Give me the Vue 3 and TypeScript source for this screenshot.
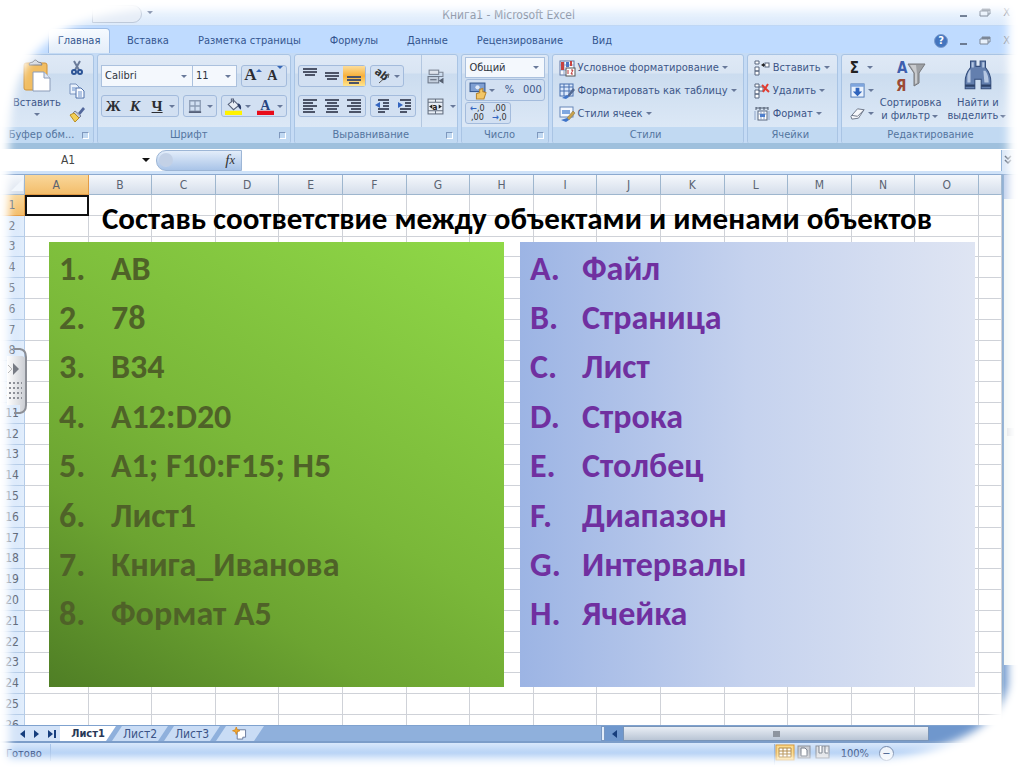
<script setup lang="ts">
interface Item { mark: string; text: string }

const tabs: string[] = ['Вставка', 'Разметка страницы', 'Формулы', 'Данные', 'Рецензирование', 'Вид']
const columns: string[] = 'ABCDEFGHIJKLMNO'.split('')
const rows: number[] = Array.from({ length: 26 }, (_, i) => i + 1)

const objects: Item[] = ['AB', '78', 'B34', 'A12:D20', 'A1; F10:F15; H5', 'Лист1', 'Книга_Иванова', 'Формат А5']
  .map((text, i) => ({ mark: `${i + 1}.`, text }))
const names: Item[] = ['Файл', 'Страница', 'Лист', 'Строка', 'Столбец', 'Диапазон', 'Интервалы', 'Ячейка']
  .map((text, i) => ({ mark: `${'ABCDEFGH'[i]}.`, text }))

const bars = (list: number[][]): string =>
  list.map(([x, y, w]) => `<rect x="${x}" y="${y}" width="${w}" height="2" fill="#4c5468"/>`).join('')

const icons: Record<string, string> = {
  top: bars([[1, 0, 14], [1, 3, 14], [3, 6, 10]]),
  middle: bars([[1, 4, 14], [1, 7, 14], [3, 10, 10]]),
  bottom: bars([[1, 8, 14], [1, 11, 14], [3, 14, 10]]),
  left: bars([[1, 1, 14], [1, 4, 10], [1, 7, 14], [1, 10, 10], [1, 13, 12]]),
  center: bars([[1, 1, 14], [3, 4, 10], [1, 7, 14], [3, 10, 10], [2, 13, 12]]),
  right: bars([[1, 1, 14], [5, 4, 10], [1, 7, 14], [5, 10, 10], [3, 13, 12]]),
  outdent: bars([[4, 1, 11], [9, 4, 6], [9, 7, 6], [4, 10, 11], [4, 13, 7]]) + '<path d="M6 4v6L1 7z" fill="#3465c0"/>',
  indent: bars([[4, 1, 11], [9, 4, 6], [9, 7, 6], [4, 10, 11], [4, 13, 7]]) + '<path d="M2 4v6l5-3z" fill="#3465c0"/>',
  angle: '<path d="M5 15L14 7M15 6l-4 1M15 6l-1 4" stroke="#555" fill="none"/><text x="0" y="9" font-size="11" font-weight="700" fill="#333" transform="rotate(38 6 7)">ab</text>',
  wrap: '<rect x="2" y="2" width="9" height="4" fill="#dfe4ec" stroke="#7a8494"/><path d="M11 4h4v4h-5" fill="none" stroke="#7a8494"/><rect x="1" y="8" width="10" height="6" fill="#c3cedd" stroke="#6d7889"/><path d="M3 11h6M12 12l3-2v4z" stroke="#555f70" fill="#555f70"/>',
  merge: '<rect x="1" y="1" width="14" height="14" fill="#e8eef6" stroke="#646f80"/><path d="M1 4h14M1 12h14M8 1v3M8 12v3" stroke="#646f80"/><path d="M2 8l3-2v4zM14 8l-3-2v4z" fill="#222"/><text x="5" y="11" font-size="8" font-weight="700" fill="#222">a</text>',
  border: '<path d="M2 2h12v12H2zM8 2v12M2 8h12" fill="none" stroke="#8c9cb4" stroke-width="1.500"/><path d="M1 15h14" stroke="#56617a" stroke-width="2"/>',
  fill: '<path d="M3 6l5-4 5 5-5 4z" fill="#e8edf5" stroke="#56617a"/><path d="M6 4V1h2v4" fill="none" stroke="#56617a"/><path d="M12 5q4 1 3 6-2-1-3-4z" fill="#2a3c68"/><rect x="0" y="12" width="16" height="4" fill="#fff200"/>',
  color: '<text x="3" y="11" font-size="13" font-weight="700" font-family="Liberation Serif" fill="#27457f">A</text><rect x="0" y="12" width="16" height="4" fill="#e80c1a"/>',
  cut: '<path d="M5 1l5 9M11 1L6 10" stroke="#6b7c9a" stroke-width="2"/><circle cx="5" cy="12" r="2" fill="none" stroke="#2c5496" stroke-width="2"/><circle cx="11" cy="12" r="2" fill="none" stroke="#2c5496" stroke-width="2"/>',
  copy: '<path d="M1 1h6l3 3v7H1z" fill="#eaf2fc" stroke="#7892bd"/><path d="M7 5h5l3 3v7H7z" fill="#f8fbff" stroke="#4e70aa"/><path d="M9 9h4M9 11h4M9 13h4M3 5h4M3 7h3" stroke="#6a8fc9"/>',
  brush: '<path d="M9 7l5-6 2 2-5 6z" fill="#53689c"/><path d="M6 5l6 5-2 2-6-5z" fill="#c5cbd8" stroke="#77809a"/><path d="M1 9l4-2 5 5-4 4z" fill="#f2cf57" stroke="#b98d22"/>',
  money: '<rect x="1" y="1" width="14" height="8" fill="#7f9fd2" stroke="#35578f"/><circle cx="8" cy="5" r="2" fill="#dfe9f8"/><path d="M7 16v-5l3-1V7l3-1v3l3 1-2 6z" fill="#f2c667" stroke="#b98730"/>',
  cond: '<rect x="1" y="1" width="14" height="14" fill="#f7f9fd" stroke="#6379a5"/><path d="M5 1v14M1 5h14M1 10h14" stroke="#8aa0c8"/><rect x="2" y="2" width="3" height="8" fill="#c7423f"/><rect x="7" y="2" width="3" height="5" fill="#4b76c4"/><rect x="11" y="1" width="2" height="5" fill="#c7423f"/><rect x="7" y="8" width="9" height="8" fill="#fff" stroke="#555"/><path d="M9 10v4M12 10h2l-2 4h2" stroke="#b33" fill="none"/>',
  table: '<rect x="1" y="1" width="13" height="12" fill="#dbe8fb" stroke="#466eae"/><path d="M1 4h13M1 8h13M5 1v12M10 1v12" stroke="#466eae"/><path d="M8 13l6-8 2 2-6 7z" fill="#536992"/><path d="M3 15l5-3 2 2-3 2z" fill="#3f74c8"/>',
  cellstyle: '<rect x="1" y="1" width="13" height="10" fill="#f4f8ff" stroke="#6686b8"/><rect x="3" y="4" width="8" height="4" fill="#7fa7e0"/><path d="M8 12l6-7 2 2-6 7z" fill="#c8a24d" stroke="#7c6a3c" stroke-width=".5"/><path d="M2 14l6-2 2 2-3 2z" fill="#3f74c8"/>',
  insert: '<path d="M1 1h4v3H1zM1 7h4v4H1zM1 11h4v4H1z" fill="#fff" stroke="#59677f"/><path d="M7 5l3-2v1h1v2h-1v1z" fill="#222"/><rect x="11" y="3" width="4" height="4" fill="#fff" stroke="#59677f"/>',
  remove: '<path d="M1 1h4v3H1zM1 7h4v4H1zM1 11h4v4H1zM5 4h4v4H5z" fill="#fff" stroke="#59677f"/><path d="M8 2l7 7M14 1L9 9" stroke="#e23c32" stroke-width="2"/>',
  format: '<path d="M2 2h12M2 1v3M6 1v3M10 1v3M14 1v3" stroke="#4d586c"/><rect x="4" y="5" width="9" height="9" fill="#fff" stroke="#59677f"/><path d="M1 5v9M15 5v9M4 8h9M7 5v9M10 5v9" stroke="#8da3c8"/><rect x="6" y="8" width="5" height="3" fill="#4f7fcc"/>',
  down: '<rect x="1" y="1" width="14" height="14" fill="#e8f1fd" stroke="#4a74b5"/><rect x="1" y="1" width="14" height="3" fill="#7ea5dd"/><path d="M6 5h4v4h3l-5 5-5-5h3z" fill="#2f64bd"/>',
  eraser: '<path d="M1 11l7-8 7 1-6 9-7 1z" fill="#f7f8fb" stroke="#6b7486"/><path d="M2 10l6 1 7-7" fill="none" stroke="#6b7486"/>',
  paste: '<rect x="1" y="4" width="23" height="27" rx="2" fill="#f1bd62" stroke="#cf9136"/><path d="M6 6q0-3 4-3 2-4 5 0 4 0 4 3z" fill="#d6dae1" stroke="#7e838e"/><path d="M10 13h11l6 6v13H10z" fill="#fff" stroke="#8b9bb8"/><path d="M21 13v6h6" fill="#dfe7f3" stroke="#8b9bb8"/>',
  sort: '<path d="M13 4h17l-6 9v10l-5 3V13z" fill="#9ea1a5" stroke="#77797d"/><path d="M15 5h6l1 9v9l-2 1V13z" fill="#c9cbce"/><text x="2" y="13" font-size="15" font-weight="700" fill="#3e5fae">А</text><text x="1" y="31" font-size="15" font-weight="700" fill="#9c4a35">Я</text>',
  find: '<path d="M6 1h5v5h4V1h5v6q5 6 5 13v7h-9v-9h-6v9H1v-7q0-7 5-13z" fill="#637fae" stroke="#344e7c"/><path d="M7 2h2v5H7zM17 2h2v5h-2zM3 15q1-5 3-6v12H3zM18 10h2q3 4 3 11h-4z" fill="#b5c7e2"/><path d="M1 24h9M16 24h9" stroke="#2d4268" stroke-width="2"/>',
  restore: '<path d="M3 1h8v5H3z" fill="#e8f1fc" stroke="#7c8797"/><path d="M3 2h8" stroke="#7c8797" stroke-width="2"/><path d="M1 3h8v5H1z" fill="#e8f1fc" stroke="#7c8797"/>',
}
const alignTop = ['top', 'middle', 'bottom']
const alignRow = ['left', 'center', 'right']
const styleRows = [['cond', 'Условное форматирование'], ['table', 'Форматировать как таблицу'], ['cellstyle', 'Стили ячеек']]
const cellRows = [['insert', 'Вставить'], ['remove', 'Удалить'], ['format', 'Формат']]
</script>

<template>
  <div class="app">
    <header class="titlebar">
      <span class="office-tail"></span>
      <button class="qat" aria-label="Панель быстрого доступа"><i class="arr"></i></button>
      <span class="doc-title">Книга1 - Microsoft Excel</span>
      <div class="winbtns">
        <button aria-label="Свернуть"><i class="min"></i></button>
        <button aria-label="Развернуть"><svg viewBox="0 0 12 9" width="12" height="9" v-html="icons.restore" /></button>
        <button aria-label="Закрыть">X</button>
      </div>
    </header>

    <nav class="tabs">
      <button class="tab active">Главная</button>
      <button v-for="t in tabs" :key="t" class="tab">{{ t }}</button>
      <div class="winbtns">
        <button class="help" aria-label="Справка">?</button>
        <button aria-label="Свернуть окно"><i class="min"></i></button>
        <button aria-label="Развернуть окно"><svg viewBox="0 0 12 9" width="12" height="9" v-html="icons.restore" /></button>
        <button aria-label="Закрыть окно">X</button>
      </div>
    </nav>

    <section class="ribbon">
      <div class="group">
        <div class="body clipboard">
          <button class="big">
            <svg viewBox="0 0 28 33" width="28" height="33" v-html="icons.paste" />
            <span>Вставить</span><i class="arr"></i>
          </button>
          <div class="stack">
            <button v-for="n in ['cut', 'copy', 'brush']" :key="n" :aria-label="n"><svg viewBox="0 0 16 16" width="16" height="16" v-html="icons[n]" /></button>
          </div>
        </div>
        <div class="foot"><span>Буфер обм...</span><i class="launch"></i></div>
      </div>

      <div class="group">
        <div class="body two">
          <div class="line">
            <div class="fields">
              <label class="field wide"><select aria-label="Шрифт"><option>Calibri</option></select><i class="arr"></i></label>
              <label class="field narrow"><select aria-label="Размер"><option>11</option></select><i class="arr"></i></label>
            </div>
            <div class="set"><button class="serif grow">A<i class="up"></i></button><button class="serif shrink">A<i class="arr blue"></i></button></div>
          </div>
          <div class="line">
            <div class="set"><button class="serif">Ж</button><button class="serif ital">К</button><button class="serif under">Ч</button><i class="arr"></i></div>
            <div class="set"><button aria-label="Границы"><svg viewBox="0 0 16 16" width="14" height="14" v-html="icons.border" /></button><i class="arr"></i></div>
            <div class="set">
              <button aria-label="Заливка"><svg viewBox="0 0 16 16" width="17" height="17" v-html="icons.fill" /></button><i class="arr"></i>
              <button aria-label="Цвет текста"><svg viewBox="0 0 16 16" width="17" height="17" v-html="icons.color" /></button><i class="arr"></i>
            </div>
          </div>
        </div>
        <div class="foot"><span>Шрифт</span><i class="launch"></i></div>
      </div>

      <div class="group">
        <div class="body align">
          <div class="two">
            <div class="line">
              <div class="set"><button v-for="n in alignTop" :key="n" :aria-label="n" :class="{ on: n === 'bottom' }"><svg viewBox="0 0 16 16" width="16" height="16" v-html="icons[n]" /></button></div>
              <div class="set"><button aria-label="Ориентация"><svg viewBox="0 0 16 16" width="16" height="16" v-html="icons.angle" /></button><i class="arr"></i></div>
            </div>
            <div class="line">
              <div class="set"><button v-for="n in alignRow" :key="n" :aria-label="n"><svg viewBox="0 0 16 16" width="16" height="16" v-html="icons[n]" /></button></div>
              <div class="set"><button v-for="n in ['outdent', 'indent']" :key="n" :aria-label="n"><svg viewBox="0 0 16 16" width="16" height="16" v-html="icons[n]" /></button></div>
            </div>
          </div>
          <div class="two merge">
            <div class="line"><button aria-label="Перенос текста"><svg viewBox="0 0 16 16" width="17" height="17" v-html="icons.wrap" /></button></div>
            <div class="line"><button aria-label="Объединить"><svg viewBox="0 0 16 16" width="17" height="17" v-html="icons.merge" /></button><i class="arr"></i></div>
          </div>
        </div>
        <div class="foot"><span>Выравнивание</span><i class="launch"></i></div>
      </div>

      <div class="group">
        <div class="body three">
          <label class="field"><select aria-label="Числовой формат"><option>Общий</option></select><i class="arr"></i></label>
          <div class="set number"><button aria-label="Денежный"><svg viewBox="0 0 16 16" width="17" height="17" v-html="icons.money" /></button><i class="arr"></i><button>%</button><button>000</button></div>
          <div class="set digits"><button><b>←</b>,0<br>,00</button><button>,00<br><b>→</b>,0</button></div>
        </div>
        <div class="foot"><span>Число</span><i class="launch"></i></div>
      </div>

      <div class="group">
        <div class="body three">
          <button v-for="[n, t] in styleRows" :key="n" class="cmd"><svg viewBox="0 0 16 16" width="16" height="16" v-html="icons[n]" />{{ t }}<i class="arr"></i></button>
        </div>
        <div class="foot"><span>Стили</span></div>
      </div>

      <div class="group">
        <div class="body three">
          <button v-for="[n, t] in cellRows" :key="n" class="cmd"><svg viewBox="0 0 16 16" width="16" height="16" v-html="icons[n]" />{{ t }}<i class="arr"></i></button>
        </div>
        <div class="foot"><span>Ячейки</span></div>
      </div>

      <div class="group">
        <div class="body edit">
          <div class="three">
            <button class="cmd sigma">Σ<i class="arr"></i></button>
            <button class="cmd" aria-label="Заполнить"><svg viewBox="0 0 16 16" width="15" height="15" v-html="icons.down" /><i class="arr"></i></button>
            <button class="cmd" aria-label="Очистить"><svg viewBox="0 0 16 16" width="15" height="15" v-html="icons.eraser" /><i class="arr"></i></button>
          </div>
          <button class="big"><svg viewBox="0 0 32 32" width="32" height="32" v-html="icons.sort" /><span>Сортировка<br>и фильтр<i class="arr"></i></span></button>
          <button class="big"><svg viewBox="0 0 26 30" width="28" height="32" v-html="icons.find" /><span>Найти и<br>выделить<i class="arr"></i></span></button>
        </div>
        <div class="foot"><span>Редактирование</span></div>
      </div>
    </section>

    <section class="formula">
      <input class="namebox" aria-label="Имя ячейки" value="A1">
      <i class="arr black"></i>
      <div class="fx"><span class="knob"></span><button>f<small>x</small></button></div>
      <input class="entry" aria-label="Строка формул">
      <button class="expand" aria-label="Развернуть строку формул"><svg viewBox="0 0 8 10" width="8" height="10"><path d="M1 1l3 3 3-3M1 5l3 3 3-3" fill="none" stroke="#3c4a60" stroke-width="1.500" /></svg></button>
    </section>

    <main class="sheet">
      <table>
        <thead>
          <tr><th class="corner"><i></i></th><th v-for="c in columns" :key="c" :class="{ sel: c === 'A' }">{{ c }}</th><th class="last"></th></tr>
        </thead>
        <tbody>
          <tr v-for="r in rows" :key="r">
            <th :class="{ sel: r === 1 }">{{ r }}</th>
            <td v-for="c in columns" :key="c" :class="{ cursor: r === 1 && c === 'A' }"></td><td></td>
          </tr>
        </tbody>
      </table>
      <div class="vscroll"><i class="thumb"></i><i class="grip"></i><i class="low"></i></div>
    </main>

    <footer class="sheetbar">
      <div class="nav">
        <button aria-label="Назад"><svg viewBox="0 0 5 8" width="5" height="8"><path d="M5 0v8L0 4z" /></svg></button>
        <button aria-label="Вперёд"><svg viewBox="0 0 5 8" width="5" height="8"><path d="M0 0v8l5-4z" /></svg></button>
        <button aria-label="Последний"><svg viewBox="0 0 8 8" width="8" height="8"><path d="M0 0v8l5-4zM6 0h2v8H6z" /></svg></button>
      </div>
      <button class="stab current">Лист1</button>
      <button class="stab">Лист2</button>
      <button class="stab">Лист3</button>
      <button class="stab new" aria-label="Вставить лист"><svg viewBox="0 0 16 14" width="16" height="13"><path d="M5 3h9v8h-3v2H5z" fill="#fff" stroke="#66779a" /><path d="M4 0l1 3 3 1-3 1-1 3-1-3-3-1 3-1z" fill="#f2a92f" stroke="#d98a20" /></svg></button>
      <div class="hscroll"><i class="split"></i><button aria-label="Влево"><svg viewBox="0 0 5 8" width="5" height="8"><path d="M5 0v8L0 4z" /></svg></button><div class="track"><i></i></div></div>
    </footer>
    <div class="status">
      <span class="ready">Готово</span>
      <div class="views">
        <svg viewBox="0 0 58 17" width="58" height="17">
          <rect x="1" y="1" width="18" height="15" fill="#fbd98a" stroke="#d79a3a" />
          <path d="M4 4h12v9H4zM8 4v9M12 4v9M4 7h12M4 10h12" fill="#fff" stroke="#b08a4a" />
          <rect x="23" y="2" width="12" height="12" fill="#c9ccd2" stroke="#8b919c" /><path d="M26 4h4l2 2v6h-6z" fill="#fff" stroke="#777e8b" />
          <rect x="41" y="2" width="13" height="12" fill="#e0e2e6" stroke="#8b919c" /><path d="M44 2v7h3V2M50 2v7h3" fill="#fff" stroke="#777e8b" />
        </svg>
      </div>
      <span class="pct">100%</span>
      <button class="zoomout" aria-label="Уменьшить">−</button>
    </div>

    <svg class="vignette" viewBox="0 0 1024 767" preserveAspectRatio="none" aria-hidden="true">
      <defs><filter id="soft" x="-5%" y="-5%" width="110%" height="110%"><feGaussianBlur stdDeviation="4" /></filter></defs>
      <path filter="url(#soft)" fill="#fff" fill-rule="evenodd" d="M-40-40H1064V807H-40ZM150 9H1008V685Q1002 712 974 731Q930 756 880 759H9V140Q10 100 22 74Q34 48 60 34Q84 14 150 9Z" />
    </svg>

    <aside class="handle"><svg viewBox="0 0 26 66" width="26" height="66">
      <defs><linearGradient id="hg"><stop offset="0" stop-color="#fff" /><stop offset="1" stop-color="#c9ccd2" /></linearGradient></defs>
      <path d="M6 8h15q4 1 4 4v45q0 7-6 8v-8H6z" fill="url(#hg)" /><path d="M13 1h6q6 1 6 8v48q0 7-6 8h-6" fill="none" stroke="#8c8f96" stroke-width="2" />
      <path d="M12 15v12l6-6z" fill="#777b84" /><path d="M7 17l4 4-4 4" fill="none" stroke="#bbb" />
      <path d="M8 35h13M8 40h13M8 45h13M8 50h13" stroke="#8d9098" stroke-width="2" stroke-dasharray="2 2" />
    </svg></aside>

    <article class="slide">
      <h1>Составь соответствие между объектами и именами объектов</h1>
      <div class="panels">
        <ul class="panel green"><li v-for="o in objects" :key="o.mark"><span>{{ o.mark }}</span>{{ o.text }}</li></ul>
        <ul class="panel blue"><li v-for="o in names" :key="o.mark"><span>{{ o.mark }}</span>{{ o.text }}</li></ul>
      </div>
    </article>
  </div>
</template>

<style>
body { margin: 0; background: #fff; }
</style>

<style scoped>
* { box-sizing: border-box; }
.app { position: relative; height: 100vh; min-height: 767px; overflow: hidden; display: flex; flex-direction: column; background: #d5e5f8; font: 11px/14px "DejaVu Sans Condensed", "Noto Sans", sans-serif; color: #3d5688; }
button { border: 0; padding: 0; background: none; font: inherit; color: inherit; display: flex; align-items: center; justify-content: center; }
svg { overflow: visible; }
.arr { flex: none; display: inline-block; border: 3px solid transparent; border-top-color: #68799a; border-bottom: 0; margin: 0 2px; }
.arr.black { border-width: 4px 4px 0; border-top-color: #111; }
.titlebar { height: 26px; flex: none; display: flex; align-items: center; background: linear-gradient(#f4f9ff, #dceafb); border-bottom: 1px solid #bfd7f5; padding-right: 14px; color: #8d97a8; }
.office-tail { width: 50px; height: 18px; margin-left: 92px; border: 1px solid #bdc9da; border-radius: 0 9px 9px 0; background: #e6edf7; align-self: flex-start; margin-top: 5px; }
.qat { margin-left: 3px; }
.doc-title { flex: 1; text-align: center; padding-top: 4px; padding-right: 98px; font-size: 12px; }
.winbtns { display: flex; gap: 12px; align-items: center; color: #7c8797; }
.min { width: 7px; height: 2px; background: #6c7b92; margin-top: 6px; }
.tabs { height: 27px; flex: none; display: flex; align-items: stretch; gap: 29px; padding: 2px 14px 0 48px; background: #bfdbff; color: #34568f; }
.tab.active { width: 62px; background: linear-gradient(#f6faff, #e3edf9); border: 1px solid #9dbce6; border-bottom: 0; border-radius: 4px 4px 0 0; margin-right: -12px; }
.tabs .winbtns { margin-left: auto; }
.help { width: 14px; height: 14px; border-radius: 50%; background: #4475be; color: #fff; font-weight: 700; border: 1px solid #7c9dce; }
.ribbon { flex: none; height: 91px; display: grid; grid-template-columns: 94fr 194fr 164fr 87fr 192fr 91fr 183fr; gap: 3px; padding-top: 1px; background: #c5dbf5; }
.group { min-width: 0; display: flex; flex-direction: column; border: 1px solid #a9c4e4; border-radius: 3px; background: linear-gradient(#dfe9f6 0, #d9e5f3 18px, #cbdcef 19px, #dce8f6 72px); overflow: hidden; }
.body { height: 72px; padding: 0 3px; }
.foot { flex: 1; display: flex; align-items: center; background: #c1d9f2; color: #54759f; padding-right: 4px; }
.foot span { flex: 1; text-align: center; white-space: nowrap; }
.launch { width: 7px; height: 7px; border: 1px solid #7f98bd; border-right-color: #fff; border-bottom-color: #fff; }
.two { display: flex; flex-direction: column; gap: 8px; padding-top: 10px; }
.line { display: flex; gap: 4px; height: 22px; align-items: center; }
.set { display: flex; height: 22px; align-items: center; border: 1px solid #a3bbdc; border-radius: 3px; background: #d2e0f2; }
.set button { width: 22px; height: 20px; }
.set .arr { margin: 0 3px 0 1px; }
.set button .arr { margin: 0; }
.set button.on { background: linear-gradient(#fcdd9a, #f8b13a 50%, #ffe58e); }
.fields { display: flex; flex: 1; }
.field { display: flex; height: 22px; align-items: center; background: #f4f8fd; border: 1px solid #abc1de; padding: 0 3px; color: #2e3440; }
.field select { flex: 1; min-width: 0; width: 0; appearance: none; border: 0; background: none; font: inherit; color: inherit; padding: 0; }
.wide { flex: 9; }
.narrow { flex: 4; border-left: 0; }
.set .serif { font: bold 15px/18px "Liberation Serif", serif; color: #2b2d33; }
.set .grow { font-size: 17px; }
.set .shrink { font-size: 14px; line-height: 20px; }
.set .blue { border-top-color: #3767b5; margin-top: 3px; }
.grow, .shrink { align-items: flex-start; }
.up { border: 3px solid transparent; border-top: 0; border-bottom-color: #3767b5; margin-top: 3px; }
.set .ital { font-style: italic; }
.set .under { text-decoration: underline; }
.clipboard { display: flex; padding-left: 10px; gap: 6px; }
.big { flex-direction: column; justify-content: flex-start; padding-top: 5px; line-height: 13px; }
.clipboard .big { padding-top: 4px; width: 52px; }
.clipboard .big span { margin: 4px 0; }
.stack { display: flex; flex-direction: column; gap: 7px; padding-top: 5px; }
.align { display: flex; gap: 5px; }
.merge { border-left: 1px solid #b3c7e0; padding-left: 5px; }
.three { display: flex; flex-direction: column; justify-content: space-between; padding-top: 2px; padding-bottom: 3px; align-items: flex-start; }
.three .field { width: 80px; height: 21px; }
.number button:last-child { width: 24px; }
.digits button { font-size: 9px; line-height: 9px; display: block; color: #333; }
.digits b { color: #3465c0; }
.cmd { height: 21px; gap: 3px; white-space: nowrap; padding-left: 3px; }
.cmd .arr { margin: 0; }
.edit { display: flex; gap: 6px; padding-left: 5px; }
.edit .three { padding-left: 0; }
.edit .big { gap: 4px; }
.edit .big .arr { vertical-align: middle; }
.sigma { font-weight: 700; font-size: 15px; color: #222; gap: 8px; }
.formula { flex: none; height: 31px; margin-top: -1px; display: flex; align-items: center; border-top: 6px solid #9fc0dd; border-bottom: 3px solid #cfe2f8; background: #fff; }
.formula input { border: 0; padding: 0; background: none; outline: 0; font: inherit; font-size: 12px; color: #444; }
.namebox { width: 136px; text-align: center; }
.formula .black { margin: 0 6px; }
.fx { width: 86px; height: 21px; border-radius: 10px 0 0 10px; background: linear-gradient(#e3edfa, #a9c4e8); border: 1px solid #9db6d6; display: flex; align-items: center; justify-content: space-between; padding-right: 6px; }
.fx button { font: italic 15px/15px "Liberation Serif", serif; color: #333; }
.knob { width: 14px; height: 14px; border-radius: 50%; background: #c3d1e6; margin-left: 2px; }
.entry { flex: 1; }
.expand { width: 23px; height: 21px; background: #d7e5f6; border-left: 1px solid #8fb0d6; justify-content: flex-start; padding-left: 2px; }
.sheet { flex: 1; min-height: 0; overflow: hidden; display: flex; align-items: flex-start; background: #fff; border-top: 1px solid #8ba9cf; }
table { flex: none; width: calc(100% - 22px); height: 561px; table-layout: fixed; border-collapse: separate; border-spacing: 0; }
th, td { padding: 0; border: 0 solid #cfd2d8; border-width: 0 1px 1px 0; line-height: 14px; }
th { font-weight: 400; color: #5b6472; font-size: 12px; }
thead th { height: 20px; background: linear-gradient(#f5f8fc, #d5deeb); border-color: #9eb6ce; }
tbody th { background: linear-gradient(90deg, #cfe2fb, #e2eefc); border-color: #b5cce8; }
.corner { width: 25px; }
.corner i { display: block; width: 0; margin-left: 11px; border: 6px solid transparent; border-right-color: #f1f6fc; border-bottom-color: #f1f6fc; }
.last { width: 23px; }
th.sel { background: linear-gradient(#f9d79a, #f3bd6b); border-color: #e39c45; }
.cursor { border: 2px solid #111; }
.vscroll { width: 22px; align-self: stretch; background: #f1f6f4; border-left: 2px solid #86a8cf; display: flex; flex-direction: column; justify-content: space-between; }
.thumb { height: 24px; background: #b9cbea; }
.grip { width: 7px; height: 8px; margin-left: 3px; background: #d9dce0; }
.low { height: 60px; background: #6f98ce; }
.sheetbar { flex: none; height: 18px; display: flex; background: #8fb0dc; border-top: 1px solid #7fa2cf; border-bottom: 2px solid #7c9dc9; color: #3b5487; fill: #173e7d; }
.nav { width: 60px; padding-left: 20px; display: flex; justify-content: space-between; padding-right: 4px; background: #d3e3f8; }
.stab { width: 56px; background: #c9dcf5; font-size: 12px; clip-path: polygon(10px 0, 100% 0, calc(100% - 10px) 100%, 0 100%); margin-right: -4px; }
.stab.current { background: #fff; color: #273857; font-weight: 700; font-size: 11px; clip-path: polygon(0 0, 100% 0, calc(100% - 10px) 100%, 0 100%); }
.stab.new { width: 48px; }
.hscroll { margin-left: auto; width: 423px; display: flex; background: #6f97cd; }
.split { width: 4px; background: #e3edf9; border: 1px solid #7897c2; }
.hscroll button { width: 18px; }
.track { width: 306px; background: linear-gradient(#e9eef5, #b9c5d5); border: 1px solid #7894b8; display: flex; align-items: center; justify-content: center; }
.track i { width: 7px; height: 6px; background: #8e959f; }
.status { flex: none; height: 24px; display: flex; align-items: flex-start; padding-top: 1px; background: linear-gradient(#d9e8fb, #b5d1f5 10px, #d9e9fc); }
.ready { width: 51px; padding: 3px 0 0 6px; border-right: 1px solid #a9c5ea; }
.views { margin-left: auto; border-left: 1px solid #98b8e2; }
.pct { padding: 3px 10px 0 8px; }
.zoomout { width: 15px; height: 15px; margin: 2px 130px 0 0; border-radius: 50%; border: 1px solid #7388aa; background: #eef3fa; }
.vignette { position: absolute; inset: 0; width: 100%; height: 100%; pointer-events: none; overflow: hidden; }
.handle { position: absolute; left: 1px; top: 348px; height: 66px; }
.slide { position: absolute; inset: 198px 49px auto; font-family: Carlito, Lato, sans-serif; font-weight: 700; }
h1 { margin: 0; height: 44px; font-size: 31px; line-height: 40px; text-align: center; color: #000; white-space: nowrap; padding-left: 10px; }
.panels { display: grid; grid-template-columns: 1fr 1fr; gap: 16px; }
.panel { margin: 0; padding: 2px 10px 48px; list-style: none; height: 445px; display: grid; grid-auto-rows: 1fr; align-items: center; font-size: 34px; line-height: 40px; white-space: nowrap; }
.panel li { display: flex; }
.panel span { width: 52px; }
.green { background: linear-gradient(32deg, #4f7e25, #6ca431 28%, #7ab839 50%, #90d948); color: #4f6228; }
.blue.panel { background: linear-gradient(90deg, #9cb4e4, #c5d2ee 50%, #dfe5f3); color: #7030a0; }
</style>
